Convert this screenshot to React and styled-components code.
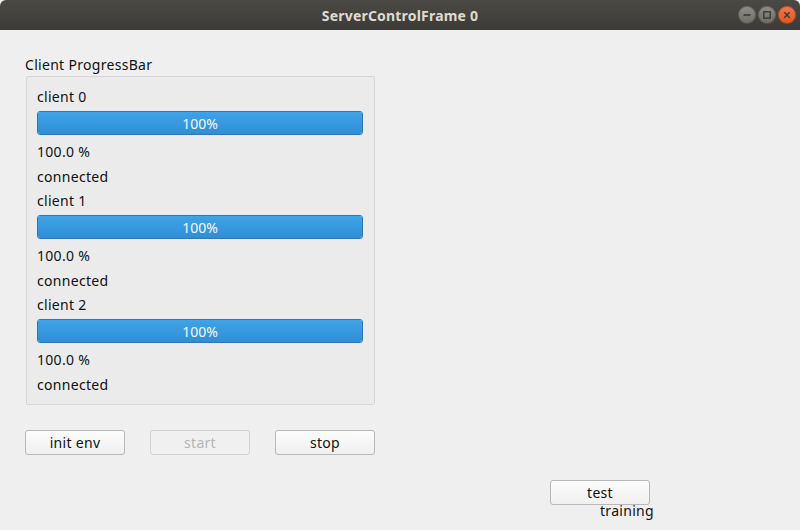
import React from "react";
import styled, { createGlobalStyle } from "styled-components";

const GlobalStyle = createGlobalStyle`
  html, body {
    margin: 0;
    padding: 0;
    background: #efefef;
  }
  body {
    font-family: "Noto Sans", "DejaVu Sans", sans-serif;
  }
`;

const clients = [
  { name: "client 0", value: 100, status: "connected" },
  { name: "client 1", value: 100, status: "connected" },
  { name: "client 2", value: 100, status: "connected" },
];

function App() {
  return (
    <>
      <GlobalStyle />
      <Window>
        <TitleBar>
          <Title>ServerControlFrame 0</Title>
          <WinButtons>
            <WinBtn>
              <svg width="16" height="16" viewBox="0 0 16 16">
                <path d="M4.5 8h7" stroke="#3a3a36" strokeWidth="1.6" />
              </svg>
            </WinBtn>
            <WinBtn>
              <svg width="16" height="16" viewBox="0 0 16 16">
                <rect x="4.8" y="4.8" width="6.4" height="6.4" fill="none" stroke="#3a3a36" strokeWidth="1.4" />
              </svg>
            </WinBtn>
            <WinBtn close>
              <svg width="16" height="16" viewBox="0 0 16 16">
                <path d="M5.3 5.3l5.4 5.4M10.7 5.3l-5.4 5.4" stroke="#3a3a36" strokeWidth="1.5" />
              </svg>
            </WinBtn>
          </WinButtons>
        </TitleBar>

        <Body>
          <GroupTitle>Client ProgressBar</GroupTitle>
          <GroupBox>
            {clients.map((c) => (
              <ClientBlock key={c.name}>
                <Label>{c.name}</Label>
                <Progress>
                  <ProgressFill style={{ width: `${c.value}%` }} />
                  <ProgressText>{c.value}%</ProgressText>
                </Progress>
                <Label top={6}>{c.value.toFixed(1)} %</Label>
                <Label top={1}>{c.status}</Label>
              </ClientBlock>
            ))}
          </GroupBox>

          <ButtonRow>
            <Button>init env</Button>
            <Button disabled>start</Button>
            <Button>stop</Button>
          </ButtonRow>

          <TestArea>
            <Button>test</Button>
            <SmallLabel>training</SmallLabel>
          </TestArea>
        </Body>
      </Window>
    </>
  );
}

const Window = styled.div`
  width: 800px;
  height: 530px;
  background: #efefef;
  display: flex;
  flex-direction: column;
  overflow: hidden;
`;

const TitleBar = styled.div`
  height: 30px;
  flex-shrink: 0;
  position: relative;
  display: flex;
  align-items: center;
  justify-content: center;
  background: linear-gradient(#4a4944, #3c3b37);
  border-top-left-radius: 6px;
  border-top-right-radius: 6px;
`;

const Title = styled.div`
  color: #dfdbd2;
  font-family: "Noto Sans", sans-serif;
  font-weight: 700;
  font-size: 14px;
  letter-spacing: 0.2px;
`;

const WinButtons = styled.div`
  position: absolute;
  right: 4px;
  top: 6px;
  display: flex;
  gap: 2px;
`;

const WinBtn = styled.div`
  width: 18px;
  height: 18px;
  border-radius: 50%;
  display: flex;
  align-items: center;
  justify-content: center;
  background: ${(p) =>
    p.close
      ? "linear-gradient(#f37a4f, #e2531e)"
      : "linear-gradient(#8f8e89, #6c6b66)"};
  box-shadow: inset 0 0 0 1px rgba(0, 0, 0, 0.25);
`;

const Body = styled.div`
  flex: 1;
  padding: 25px 0 0 25px;
  display: flex;
  flex-direction: column;
  font-size: 14px;
  color: #111;
  letter-spacing: 0.3px;
`;

const GroupTitle = styled.div`
  height: 21px;
  line-height: 20px;
  font-size: 14px;
`;

const GroupBox = styled.div`
  margin-left: 1px;
  width: 349px;
  height: 329px;
  box-sizing: border-box;
  border: 1px solid #d6d6d6;
  border-radius: 2px;
  background: #ebebeb;
  padding: 9px 11px 0 10px;
  display: flex;
  flex-direction: column;
`;

const ClientBlock = styled.div`
  display: flex;
  flex-direction: column;
`;

const Label = styled.div`
  height: 24px;
  line-height: 22px;
  font-size: 14px;
  margin-top: ${(p) => p.top || 0}px;
`;

const Progress = styled.div`
  position: relative;
  width: 326px;
  height: 24px;
  box-sizing: border-box;
  border: 1px solid #2a78b8;
  border-radius: 3px;
  background: #e6e6e6;
  overflow: hidden;
  margin-top: 1px;
  letter-spacing: 0;
`;

const ProgressFill = styled.div`
  height: 100%;
  background: linear-gradient(#3fa3e8, #2f8fd6);
`;

const ProgressText = styled.div`
  position: absolute;
  inset: 0;
  display: flex;
  align-items: center;
  justify-content: center;
  color: #f4f8fc;
  font-size: 14px;
`;

const ButtonRow = styled.div`
  display: flex;
  gap: 25px;
  margin-top: 25px;
`;

const Button = styled.button`
  width: 100px;
  height: 25px;
  box-sizing: border-box;
  border: 1px solid #b8b8b8;
  border-radius: 3px;
  background: linear-gradient(#fcfcfc, #f0f0f0);
  font-family: "Noto Sans", sans-serif;
  font-size: 14px;
  letter-spacing: 0.3px;
  color: #111;
  padding: 0;
  &:disabled {
    color: #b5b5b5;
    border-color: #d2d2d2;
    background: #f0f0f0;
  }
`;

const TestArea = styled.div`
  margin-top: 25px;
  margin-left: 525px;
  display: flex;
  flex-direction: column;
  align-items: flex-start;
`;

const SmallLabel = styled.div`
  margin-left: 50px;
  margin-top: -2px;
  font-size: 14px;
  line-height: 16px;
  color: #111;
`;

export default App;
